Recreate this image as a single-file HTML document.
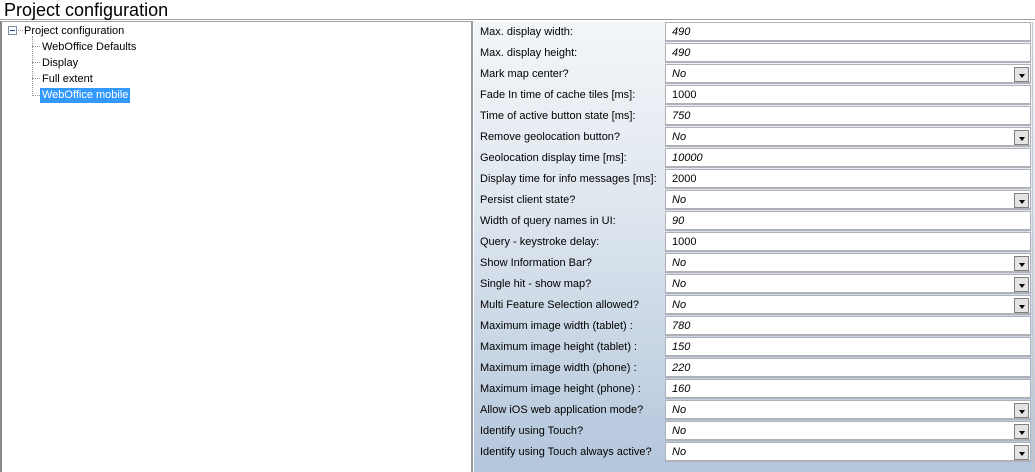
<!DOCTYPE html>
<html><head><style>
body{margin:0;width:1035px;height:472px;overflow:hidden;background:#fff;font-family:"Liberation Sans",sans-serif;position:relative}
.title{position:absolute;left:0;top:0;width:1035px;height:20px;border-bottom:1px solid #a0a0a0;font-size:18px;line-height:20px;padding-left:4px;box-sizing:border-box}
.left{position:absolute;left:0;top:21px;width:473px;height:451px;border-left:2px solid #8a8a8a;border-right:2px solid #9a9aa4;border-top:1px solid #a0a0a0;box-sizing:border-box;font-size:11px}
.tree div{position:absolute;white-space:nowrap;line-height:14px}
.right{position:absolute;left:474px;top:22px;width:561px;height:450px;background:linear-gradient(#f3f6f9,#dfe7ef 40%,#b4c6dc)}
.row{position:absolute;left:0;width:561px;height:21px;font-size:11px}
.lab{position:absolute;left:6px;top:4px;white-space:nowrap}
.val{position:absolute;left:191px;top:0;width:366px;height:20px;background:#fff;border:1px solid #b0b0b8;border-bottom:2px solid #b0b0b8;box-sizing:border-box;font-style:italic;padding-left:6px;line-height:18px}
.val.n{font-style:normal}
.dd{position:absolute;right:1px;top:2px;width:15px;height:15px;box-sizing:border-box;border:1px solid #808080;background:#e4e4e4}
.dd:after{content:"";position:absolute;left:4px;top:6px;border-left:3px solid transparent;border-right:3px solid transparent;border-top:4px solid #000}
.vline{position:absolute;right:2px;top:0;width:1px;height:450px;background:#c8c8c8}
</style></head><body>
<div class="title">Project configuration</div>
<div class="left">
<div class="tree">
<div style="left:6px;top:4px;width:9px;height:9px;border:1px solid #8090a8;box-sizing:border-box"></div>
<div style="left:8px;top:8px;width:5px;height:1px;background:#2040a0"></div>
<div style="left:16px;top:8px;width:5px;border-top:1px dotted #999"></div>
<div style="left:30px;top:14px;height:60px;border-left:1px dotted #999"></div>
<div style="left:30px;top:24px;width:8px;border-top:1px dotted #999"></div>
<div style="left:30px;top:40px;width:8px;border-top:1px dotted #999"></div>
<div style="left:30px;top:56px;width:8px;border-top:1px dotted #999"></div>
<div style="left:30px;top:73px;width:8px;border-top:1px dotted #999"></div>
<div style="left:22px;top:2px">Project configuration</div>
<div style="left:40px;top:18px">WebOffice Defaults</div>
<div style="left:40px;top:34px">Display</div>
<div style="left:40px;top:50px">Full extent</div>
<div style="left:38px;top:66px;background:#3399ff;color:#fff;padding:0 2px;height:15px;line-height:15px">WebOffice mobile</div>
</div>
</div>
<div class="right">
<div class="vline"></div>
<div class="row" style="top:0px"><span class="lab">Max. display width:</span><div class="val">490</div></div>
<div class="row" style="top:21px"><span class="lab">Max. display height:</span><div class="val">490</div></div>
<div class="row" style="top:42px"><span class="lab">Mark map center?</span><div class="val">No<div class="dd"></div></div></div>
<div class="row" style="top:63px"><span class="lab">Fade In time of cache tiles [ms]:</span><div class="val n">1000</div></div>
<div class="row" style="top:84px"><span class="lab">Time of active button state [ms]:</span><div class="val">750</div></div>
<div class="row" style="top:105px"><span class="lab">Remove geolocation button?</span><div class="val">No<div class="dd"></div></div></div>
<div class="row" style="top:126px"><span class="lab">Geolocation display time [ms]:</span><div class="val">10000</div></div>
<div class="row" style="top:147px"><span class="lab">Display time for info messages [ms]:</span><div class="val n">2000</div></div>
<div class="row" style="top:168px"><span class="lab">Persist client state?</span><div class="val">No<div class="dd"></div></div></div>
<div class="row" style="top:189px"><span class="lab">Width of query names in UI:</span><div class="val">90</div></div>
<div class="row" style="top:210px"><span class="lab">Query - keystroke delay:</span><div class="val n">1000</div></div>
<div class="row" style="top:231px"><span class="lab">Show Information Bar?</span><div class="val">No<div class="dd"></div></div></div>
<div class="row" style="top:252px"><span class="lab">Single hit - show map?</span><div class="val">No<div class="dd"></div></div></div>
<div class="row" style="top:273px"><span class="lab">Multi Feature Selection allowed?</span><div class="val">No<div class="dd"></div></div></div>
<div class="row" style="top:294px"><span class="lab">Maximum image width (tablet) :</span><div class="val">780</div></div>
<div class="row" style="top:315px"><span class="lab">Maximum image height (tablet) :</span><div class="val">150</div></div>
<div class="row" style="top:336px"><span class="lab">Maximum image width (phone) :</span><div class="val">220</div></div>
<div class="row" style="top:357px"><span class="lab">Maximum image height (phone) :</span><div class="val">160</div></div>
<div class="row" style="top:378px"><span class="lab">Allow iOS web application mode?</span><div class="val">No<div class="dd"></div></div></div>
<div class="row" style="top:399px"><span class="lab">Identify using Touch?</span><div class="val">No<div class="dd"></div></div></div>
<div class="row" style="top:420px"><span class="lab">Identify using Touch always active?</span><div class="val">No<div class="dd"></div></div></div>
</div>
</body></html>
